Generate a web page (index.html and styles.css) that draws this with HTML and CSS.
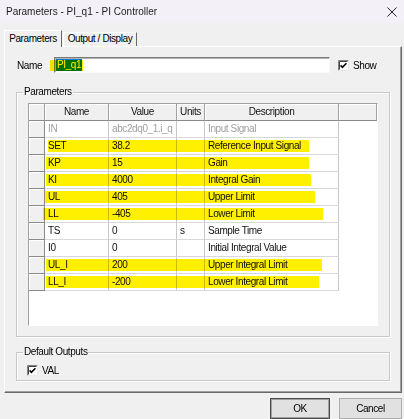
FILE: index.html
```html
<!DOCTYPE html>
<html>
<head>
<meta charset="utf-8">
<title>Parameters - PI_q1 - PI Controller</title>
<link rel="stylesheet" href="styles.css">
</head>
<body>
<div class="titlebar">
  <span class="title">Parameters - PI_q1 - PI Controller</span>
  <svg class="close" width="10" height="10" viewBox="0 0 10 10"><path d="M0.5 0.5L9.5 9.5M9.5 0.5L0.5 9.5" stroke="#222" stroke-width="1" fill="none"/></svg>
</div>
<div class="tabs">
  <div class="tab active">Parameters</div>
  <div class="tab">Output / Display</div>
</div>
<div class="panel">
  <div class="name-row">
    <span class="name-label">Name</span>
    <div class="input"><span class="sel">PI_q1</span><span class="hl name-hl"></span></div>
    <svg class="check show-check" width="11" height="11" viewBox="0 0 11 11"><rect x="0" y="0" width="11" height="11" fill="#fff"/><path d="M0.5 10.5V0.5H10.5" stroke="#808080" fill="none"/><path d="M1.5 9.5V1.5H9.5" stroke="#404040" fill="none"/><path d="M0.5 10.5H10.5V0.5" stroke="#e8e8e8" fill="none"/><path d="M2.6 5.4L4.4 7.3L8.4 3.2" stroke="#000" stroke-width="1.6" fill="none"/></svg>
    <span class="show-label">Show</span>
  </div>
  <fieldset class="group params">
    <legend>Parameters</legend>
    <div class="group-body">
      <div class="grid">
        <div class="row head">
          <div class="c rh"></div><div class="c">Name</div><div class="c">Value</div><div class="c">Units</div><div class="c">Description</div><div class="c"></div>
        </div>
        <div class="row dis"><div class="c rh"></div><div class="c">IN</div><div class="c">abc2dq0_1.i_q</div><div class="c"></div><div class="c">Input Signal</div><div class="c f"></div></div>
        <div class="row"><div class="c rh"></div><div class="c">SET</div><div class="c">38.2</div><div class="c"></div><div class="c">Reference Input Signal</div><div class="c f"></div><span class="hl" style="left:19px;width:261px"></span></div>
        <div class="row"><div class="c rh"></div><div class="c">KP</div><div class="c">15</div><div class="c"></div><div class="c">Gain</div><div class="c f"></div><span class="hl" style="left:17px;width:263px"></span></div>
        <div class="row"><div class="c rh"></div><div class="c">KI</div><div class="c">4000</div><div class="c"></div><div class="c">Integral Gain</div><div class="c f"></div><span class="hl" style="left:17px;width:265px"></span></div>
        <div class="row"><div class="c rh"></div><div class="c">UL</div><div class="c">405</div><div class="c"></div><div class="c">Upper Limit</div><div class="c f"></div><span class="hl" style="left:16px;width:270px"></span></div>
        <div class="row"><div class="c rh"></div><div class="c">LL</div><div class="c">-405</div><div class="c"></div><div class="c">Lower Limit</div><div class="c f"></div><span class="hl" style="left:14px;width:280px"></span></div>
        <div class="row"><div class="c rh"></div><div class="c">TS</div><div class="c">0</div><div class="c">s</div><div class="c">Sample Time</div><div class="c f"></div></div>
        <div class="row"><div class="c rh"></div><div class="c">I0</div><div class="c">0</div><div class="c"></div><div class="c">Initial Integral Value</div><div class="c f"></div></div>
        <div class="row"><div class="c rh"></div><div class="c">UL_I</div><div class="c">200</div><div class="c"></div><div class="c">Upper Integral Limit</div><div class="c f"></div><span class="hl" style="left:17px;width:276px"></span></div>
        <div class="row"><div class="c rh"></div><div class="c">LL_I</div><div class="c">-200</div><div class="c"></div><div class="c">Lower Integral Limit</div><div class="c f"></div><span class="hl" style="left:17px;width:273px"></span></div>
      </div>
    </div>
  </fieldset>
  <fieldset class="group outputs">
    <legend>Default Outputs</legend>
    <div class="group-body out-body">
      <svg class="check" width="11" height="11" viewBox="0 0 11 11"><rect x="0" y="0" width="11" height="11" fill="#fff"/><path d="M0.5 10.5V0.5H10.5" stroke="#808080" fill="none"/><path d="M1.5 9.5V1.5H9.5" stroke="#404040" fill="none"/><path d="M0.5 10.5H10.5V0.5" stroke="#e8e8e8" fill="none"/><path d="M2.6 5.4L4.4 7.3L8.4 3.2" stroke="#000" stroke-width="1.6" fill="none"/></svg>
      <span class="val-label">VAL</span>
    </div>
  </fieldset>
</div>
<div class="buttons">
  <div class="btn default">OK</div>
  <div class="btn">Cancel</div>
</div>
</body>
</html>
```

FILE: styles.css
```css
* { box-sizing: border-box; }
html, body { margin: 0; padding: 0; }
body {
  width: 404px;
  height: 419px;
  overflow: hidden;
  background: #f0f0f0;
  font-family: "Liberation Sans", Arial, sans-serif;
  font-size: 10px;
  letter-spacing: -0.4px;
  color: #000;
}

.titlebar {
  height: 23px;
  background: #f3f1f7;
  display: flex;
  align-items: center;
  justify-content: space-between;
  padding: 0 7px 0 6px;
}
.title { letter-spacing: 0; color: #1b1b1b; }

.tabs {
  display: flex;
  align-items: flex-end;
  height: 17px;
  margin-top: 7px;
  margin-bottom: -1px;
  padding-left: 4px;
  position: relative;
  z-index: 1;
}
.tab {
  height: 14px;
  width: 74px;
  line-height: 12px;
  text-align: center;
  border: 1px solid;
  border-color: #fff #696969 transparent #fff;
  border-bottom: none;
  background: #f0f0f0;
  margin-bottom: 1px;
}
.tab.active {
  width: 58px;
  height: 17px;
  line-height: 15px;
  margin-bottom: 0;
  margin-left: 0;
  margin-right: 1px;
}

.panel {
  margin: 0 2px 0 4px;
  height: 347px;
  border: 1px solid;
  border-color: #fff #696969 #696969 #fff;
  box-shadow: inset -1px -1px 0 #a0a0a0;
  padding: 10px 0 0 11px;
}

.name-row {
  display: flex;
  align-items: center;
  height: 16px;
  padding-left: 1px;
}
.name-label { width: 37px; }
.input {
  position: relative;
  width: 276px;
  height: 16px;
  background: #fff;
  border: 1px solid;
  border-color: #7a7a7a #f8f8f8 #f8f8f8 #7a7a7a;
  box-shadow: inset 1px 1px 0 #b4b4b4;
  padding: 1px 0 0 1px;
  line-height: 12px;
}
.sel {
  display: inline-block;
  background: #0078d7;
  color: #fff;
  padding: 0 1px;
  height: 12px;
}
.show-check { margin-left: 8px; }
.show-label { margin-left: 4px; }

.hl {
  position: absolute;
  top: 2px;
  height: 12px;
  background: #fff000;
  mix-blend-mode: multiply;
  pointer-events: none;
}
.name-hl { left: -5px; top: 2px; width: 33px; height: 11px; }

.group {
  margin: 0;
  padding: 0;
  min-width: 0;
  width: 374px;
  border: 1px solid #c8c8c8;
  box-shadow: 1px 1px 0 #fff, inset 1px 1px 0 #fff;
}
.group legend {
  margin-left: 6px;
  padding: 0 1px;
  line-height: 12px;
}
.params { margin-top: 13px; }
.group-body { padding: 5px 11px 10px 11px; }

.grid {
  width: 350px;
  height: 223px;
  background: #fff;
  border: 1px solid;
  border-color: #a0a0a0 #fff #fff #a0a0a0;
}
.row {
  position: relative;
  display: grid;
  grid-template-columns: 16px 64px 68px 28px 134px 38px;
  height: 17px;
}
.c {
  height: 17px;
  line-height: 16px;
  padding-left: 3px;
  white-space: nowrap;
  overflow: hidden;
  border-right: 1px solid #c8c8c8;
  border-bottom: 1px solid #d8d8d8;
  color: #111;
}
.c.f { border: none; }
.c.rh {
  background: #f0f0f0;
  border-right: 1px solid #8a8a8a;
  border-bottom: 1px solid #8a8a8a;
  box-shadow: inset 1px 1px 0 #fff;
}
.head .c {
  background: #f0f0f0;
  text-align: center;
  padding-left: 0;
  border-right: 1px solid #a0a0a0;
  border-bottom: 1px solid #8a8a8a;
  box-shadow: inset 1px 1px 0 #fff;
}
.dis .c { color: #a0a0a0; }

.outputs { margin-top: 9px; }
.out-body {
  display: flex;
  align-items: center;
  padding: 7px 10px 4px 10px;
  height: 22px;
}
.val-label { margin-left: 4px; }

.buttons {
  display: flex;
  justify-content: flex-end;
  gap: 9px;
  margin-top: 5px;
  padding-right: 2px;
}
.btn {
  width: 63px;
  height: 21px;
  line-height: 19px;
  text-align: center;
  background: #e1e1e1;
  border: 1px solid #adadad;
}
.btn.default {
  width: 60px;
  border: 1px solid #4a4a4a;
  box-shadow: inset 0 0 0 1px #a0a0a0;
}
```
